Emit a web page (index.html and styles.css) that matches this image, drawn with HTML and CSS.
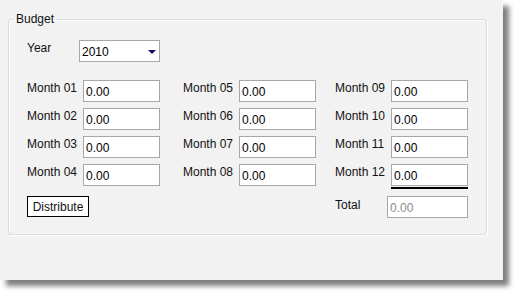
FILE: index.html
```html
<!DOCTYPE html>
<html lang="en">

<head>
    <meta charset="UTF-8">
    <title>Budget</title>
    <link rel="stylesheet" href="styles.css">
</head>

<body>

    <div class="window">
        <fieldset class="budget">
            <legend>Budget</legend>

            <div class="budget-body">
                <div class="year-row">
                    <label class="year-label">Year</label>
                    <div class="combo">
                        <span>2010</span>
                        <span class="combo-arrow"></span>
                    </div>
                </div>

                <div class="months">
                    <div class="col col-a">
                        <div class="row"><label>Month 01</label><input type="text" value="0.00"></div>
                        <div class="row"><label>Month 02</label><input type="text" value="0.00"></div>
                        <div class="row"><label>Month 03</label><input type="text" value="0.00"></div>
                        <div class="row"><label>Month 04</label><input type="text" value="0.00"></div>
                        <button type="button" class="distribute">Distribute</button>
                    </div>

                    <div class="col col-b">
                        <div class="row"><label>Month 05</label><input type="text" value="0.00"></div>
                        <div class="row"><label>Month 06</label><input type="text" value="0.00"></div>
                        <div class="row"><label>Month 07</label><input type="text" value="0.00"></div>
                        <div class="row"><label>Month 08</label><input type="text" value="0.00"></div>
                    </div>

                    <div class="col col-c">
                        <div class="row"><label>Month 09</label><input type="text" value="0.00"></div>
                        <div class="row"><label>Month 10</label><input type="text" value="0.00"></div>
                        <div class="row"><label>Month 11</label><input type="text" value="0.00"></div>
                        <div class="row">
                            <label>Month 12</label>
                            <div class="last-field">
                                <input type="text" value="0.00">
                                <div class="sum-line"></div>
                            </div>
                        </div>
                        <div class="row total-row">
                            <label class="total-label">Total</label>
                            <input type="text" class="total" value="0.00" readonly>
                        </div>
                    </div>
                </div>
            </div>
        </fieldset>
    </div>

</body>

</html>
```

FILE: styles.css
```css
* {
    box-sizing: border-box;
}

html,
body {
    background-color: #fff;
}

body {
    margin: 0;
    min-height: 294px;
    font-family: 'Liberation Sans', Arial, sans-serif;
    font-size: 12px;
    color: #111;
}

.window {
    width: 503px;
    height: 280px;
    background-color: #f2f2f2;
    padding-top: 12px;
    box-shadow: 6px 6px 5px rgba(0, 0, 0, 0.5);
}

.budget {
    margin: 0 0 0 8px;
    width: 479px;
    padding: 0 0 16px 5px;
    border: 1px solid #d3dde4;
    border-radius: 3px;
    box-shadow: inset 1px 1px 0 #fff, 1px 1px 0 #fff;
}

.budget legend {
    padding: 0 2px;
    line-height: 14px;
    color: #111;
}

.budget-body {
    padding: 14px 0 0 13px;
}

.year-row {
    display: flex;
    align-items: flex-start;
    margin-bottom: 18px;
}

.year-label {
    width: 52px;
    line-height: 14px;
    padding-top: 1px;
}

.combo {
    width: 81px;
    height: 22px;
    border: 1px solid #a7a7a7;
    background-color: #fff;
    display: flex;
    align-items: center;
    justify-content: space-between;
    padding: 1px 3px 0 2px;
    color: #000;
}

.combo-arrow {
    width: 0;
    height: 0;
    border-left: 4px solid transparent;
    border-right: 4px solid transparent;
    border-top: 4px solid #10105e;
    margin-top: 1px;
}

.months {
    display: flex;
}

.col {
    display: flex;
    flex-direction: column;
    gap: 6px;
}

.col-a {
    width: 156px;
}

.col-b {
    width: 152px;
}

.row {
    display: flex;
    align-items: flex-start;
}

.row label {
    width: 56px;
    line-height: 14px;
    padding-top: 1px;
    white-space: nowrap;
}

.row input {
    width: 77px;
    height: 22px;
    border: 1px solid #a7a7a7;
    background-color: #fff;
    padding: 1px 2px 0 2px;
    margin: 0;
    font-family: inherit;
    font-size: 12px;
    color: #000;
    outline: none;
}

.last-field {
    display: flex;
    flex-direction: column;
}

.sum-line {
    height: 2px;
    margin-top: 1px;
    background-color: #000;
}

.total-row {
    margin-top: 1px;
}

.total-label {
    width: 52px !important;
    padding-top: 2px !important;
}

.row input.total {
    width: 81px;
    color: #8c8c8c;
}

.distribute {
    margin-top: 4px;
    width: 62px;
    height: 21px;
    padding: 0;
    border: 1px solid #000;
    background-color: #fff;
    font-family: inherit;
    font-size: 12px;
    color: #111;
    cursor: pointer;
}
```
